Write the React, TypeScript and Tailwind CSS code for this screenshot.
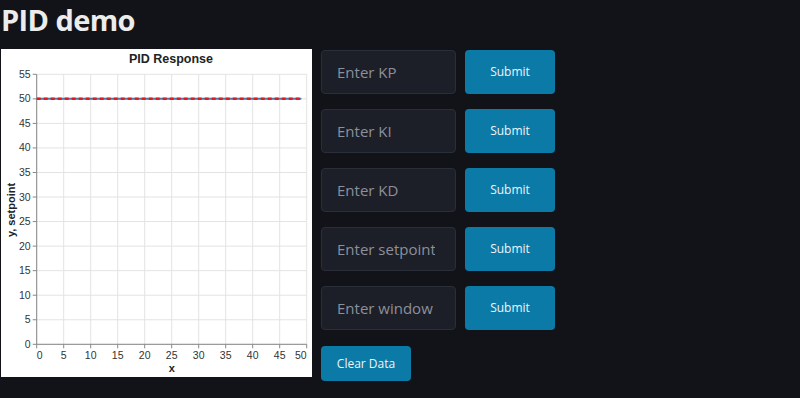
import React from "react";

const X0 = 35.7;
const XS = 5.4;
const Y0 = 295.3;
const YS = 4.909;

function Chart() {
  const xt = Array.from({ length: 11 }, (_, i) => i * 5);
  const yt = Array.from({ length: 12 }, (_, i) => i * 5);
  const px = (v: number) => X0 + v * XS;
  const py = (v: number) => Y0 - v * YS;
  return (
    <svg width="311" height="328" className="block bg-white" style={{ fontFamily: "'Liberation Sans', Arial, sans-serif" }}>
      <text x="170" y="14" textAnchor="middle" fontSize="12.5" fontWeight="bold" fill="#222">PID Response</text>
      {xt.map((v) => (
        <line key={"gx" + v} x1={px(v)} x2={px(v)} y1={py(55)} y2={py(0)} stroke="#e3e3e3" strokeWidth="1" />
      ))}
      {yt.map((v) => (
        <line key={"gy" + v} x1={px(0)} x2={px(50)} y1={py(v)} y2={py(v)} stroke="#e3e3e3" strokeWidth="1" />
      ))}
      <line x1={px(0)} x2={px(0)} y1={py(55)} y2={py(0)} stroke="#888" />
      <line x1={px(0)} x2={px(50)} y1={py(0)} y2={py(0)} stroke="#888" />
      {yt.map((v) => (
        <g key={"ty" + v}>
          <line x1={px(0) - 4} x2={px(0)} y1={py(v)} y2={py(v)} stroke="#888" />
          <text x={px(0) - 6} y={py(v) + 3.5} textAnchor="end" fontSize="10.5" fill="#333">{v}</text>
        </g>
      ))}
      {xt.map((v) => (
        <g key={"tx" + v}>
          <line x1={px(v)} x2={px(v)} y1={py(0)} y2={py(0) + 4} stroke="#888" />
          <text
            x={px(v)}
            y={py(0) + 15}
            textAnchor={v === 0 ? "start" : v === 50 ? "end" : "middle"}
            fontSize="10.5"
            fill="#333"
          >
            {v}
          </text>
        </g>
      ))}
      <line x1={px(0)} x2={px(49)} y1={py(50)} y2={py(50)} stroke="#4c78a8" strokeWidth="2" />
      <line x1={px(0)} x2={px(49)} y1={py(50)} y2={py(50)} stroke="#e41a1c" strokeWidth="2.5" strokeDasharray="4 3" />
      <text x={X0 + 135} y="323" textAnchor="middle" fontSize="11" fontWeight="bold" fill="#222">x</text>
      <text transform="translate(14 161) rotate(-90)" textAnchor="middle" fontSize="11" fontWeight="bold" fill="#222">y, setpoint</text>
    </svg>
  );
}

const rows = ["Enter KP", "Enter KI", "Enter KD", "Enter setpoint", "Enter window"];

export default function App() {
  return (
    <div className="w-[800px] h-[398px] overflow-hidden bg-[#111318] text-white" style={{ fontFamily: "'Open Sans', 'Noto Sans', sans-serif" }}>
      <h1 className="h-[49px] pl-[1px] pt-[1px] text-[29px] font-bold leading-[38px] text-[#ececec] tracking-[-0.6px]">PID demo</h1>
      <div className="flex gap-[9px] pl-[1px]">
        <Chart />
        <div className="flex flex-col pt-[1px]">
          <div className="flex flex-col gap-[15px]">
            {rows.map((r) => (
              <div key={r} className="flex gap-[9px]">
                <input
                  placeholder={r}
                  className="w-[135px] h-[44px] rounded-[4px] border border-[#2a2e38] bg-[#1c1f28] pl-[15px] pr-[20px] text-[15px] text-white placeholder:text-[#8c909a] outline-none"
                />
                <button className="w-[90px] h-[44px] rounded-[4px] bg-[#0b7aa7] text-[12px] text-[#f0f4f8]">Submit</button>
              </div>
            ))}
          </div>
          <button className="mt-[16px] w-[90px] h-[35px] rounded-[4px] bg-[#0b7aa7] text-[12px] text-[#f0f4f8]">Clear Data</button>
        </div>
      </div>
    </div>
  );
}
